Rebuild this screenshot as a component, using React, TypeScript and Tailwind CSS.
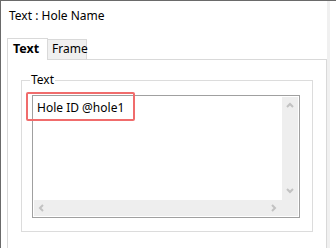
import React from "react";

function Chevron({ dir }: { dir: "up" | "down" | "left" | "right" }) {
  const paths: Record<string, string> = {
    up: "M1 5 L4 2 L7 5",
    down: "M1 2 L4 5 L7 2",
    left: "M5 1 L2 4 L5 7",
    right: "M2 1 L5 4 L2 7",
  };
  return (
    <svg width="8" height="8" viewBox="0 0 8 8">
      <path d={paths[dir]} fill="none" stroke="#c2c2c2" strokeWidth="2" />
    </svg>
  );
}

export default function App() {
  return (
    <div
      className="relative w-[336px] h-[248px] bg-white border-t border-l border-[#6a6a6a] overflow-hidden flex text-black"
      style={{ fontFamily: '"Noto Sans", "Liberation Sans", sans-serif' }}
    >
      <div className="w-[326px] flex flex-col">
        <div className="h-[37px] pl-[8px] pt-[7px] text-[12px] leading-[16px]">Text : Hole Name</div>
        <div className="flex pl-[6px] items-end h-[22px] relative z-10">
          <div className="w-[41px] h-[22px] border-l border-t border-r border-[#d9d9d9] bg-white text-[12.5px] font-bold leading-[18px] pl-[5px] pt-[1px]">
            Text
          </div>
          <div className="w-[39px] h-[20px] border-t border-r border-[#d9d9d9] bg-[#f0f0f0] text-[12px] leading-[18px] pl-[4px] mb-[1px]">
            Frame
          </div>
        </div>
        <div className="ml-[6px] -mt-[1px] flex-1 border-t border-l border-r border-[#d9d9d9] px-[13px] pt-[20px]">
          <div className="relative h-[152px] border border-[#dcdcdc] pl-[10px] pr-[12px] pt-[14px] pb-[13px]">
            <div className="absolute left-[8px] -top-[9px] bg-white px-[1px] text-[12px] leading-[16px]">Text</div>
            <div className="h-full border border-[#a0a0a0] p-[1px] flex flex-col">
              <div className="flex-1 flex min-h-0">
                <div className="flex-1 pl-[3px] pt-[3px] text-[12px] leading-[16px]">Hole ID @hole1</div>
                <div className="w-[16px] bg-[#eeeeee] flex flex-col items-center justify-between py-[5px]">
                  <Chevron dir="up" />
                  <Chevron dir="down" />
                </div>
              </div>
              <div className="h-[16px] bg-[#eeeeee] flex items-center justify-between pl-[4px] pr-[20px]">
                <Chevron dir="left" />
                <Chevron dir="right" />
              </div>
            </div>
          </div>
        </div>
      </div>
      <div className="w-[3px] bg-[#f0f0f0]" />
      <div className="absolute left-[25px] top-[91px] w-[109px] h-[29px] border-2 border-[#f06c6c] rounded-[2px]" />
    </div>
  );
}
